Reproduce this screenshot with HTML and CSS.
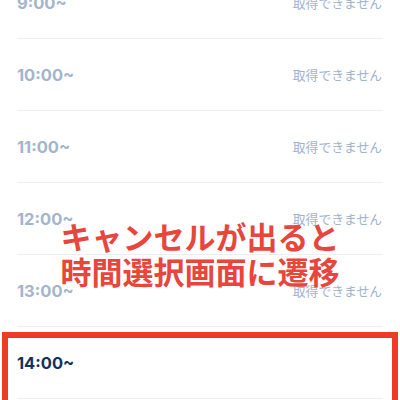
FILE: index.html
```html
<!DOCTYPE html>
<html lang="ja">
<head>
<meta charset="utf-8">
<link rel="stylesheet" href="styles.css">
</head>
<body>
<div class="page">
  <ul class="slots">
    <li class="slot"><span class="time">9:00~</span><span class="status">取得できません</span></li>
    <li class="slot"><span class="time">10:00~</span><span class="status">取得できません</span></li>
    <li class="slot"><span class="time">11:00~</span><span class="status">取得できません</span></li>
    <li class="slot"><span class="time">12:00~</span><span class="status">取得できません</span></li>
    <li class="slot"><span class="time">13:00~</span><span class="status">取得できません</span></li>
    <li class="slot slot-open"><span class="time">14:00~</span><span class="status"></span></li>
  </ul>
  <div class="highlight"></div>
  <div class="caption">キャンセルが出ると<br>時間選択画面に遷移</div>
</div>
</body>
</html>
```
FILE: styles.css
```css
html, body {
  margin: 0;
  padding: 0;
  background: #ffffff;
}
.page {
  position: relative;
  width: 400px;
  height: 400px;
  overflow: hidden;
  font-family: "Noto Sans", "Noto Sans CJK JP", sans-serif;
}
.slots {
  list-style: none;
  margin: -33px 0 0 0;
  padding: 0 17px;
}
.slot {
  height: 71px;
  border-bottom: 1px solid #eceef1;
  display: flex;
  align-items: center;
  justify-content: space-between;
}
.time {
  font-family: Inter, "Noto Sans", sans-serif;
  font-size: 16.5px;
  font-weight: 700;
  color: #a3b5cc;
}
.status {
  font-family: "Noto Sans CJK JP", sans-serif;
  font-size: 12.8px;
  color: #a1b3ca;
  margin-right: 1px;
}
.slot-open .time {
  color: #15305a;
}
.highlight {
  position: absolute;
  left: 2px;
  top: 332px;
  width: 384px;
  height: 80px;
  border: 6px solid #ee3b25;
}
.caption {
  position: absolute;
  left: 0;
  right: 0;
  top: 218px;
  text-align: center;
  font-family: "Noto Sans CJK JP", sans-serif;
  font-weight: 700;
  font-size: 31px;
  line-height: 35px;
  color: #e8453c;
}
```
